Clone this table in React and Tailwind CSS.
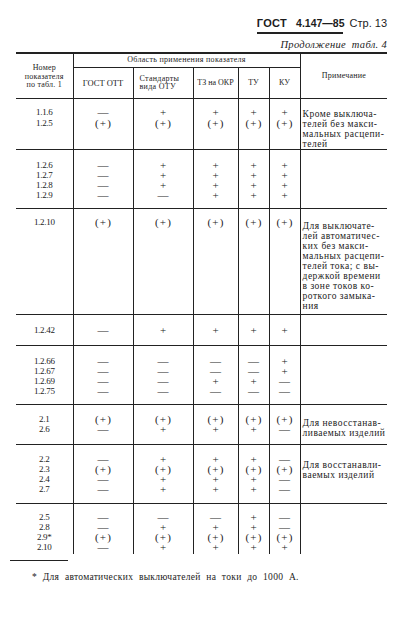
import React from "react"

const rows = [
  {
    h: 51, pt: 8, ptNote: 10, lh: 11,
    num: ["1.1.6", "1.2.5"],
    cols: [["—", "(+)"], ["+", "(+)"], ["+", "(+)"], ["+", "(+)"], ["+", "(+)"]],
    note: ["Кроме выключа-", "телей без макси-", "мальных расцепи-", "телей"]
  },
  {
    h: 59, pt: 10, ptNote: 10, lh: 10,
    num: ["1.2.6", "1.2.7", "1.2.8", "1.2.9"],
    cols: [["—", "—", "—", "—"], ["+", "+", "+", "—"], ["+", "+", "+", "+"], ["+", "+", "+", "+"], ["+", "+", "+", "+"]],
    note: []
  },
  {
    h: 106, pt: 8, ptNote: 12, lh: 10,
    num: ["1.2.10"],
    cols: [["(+)"], ["(+)"], ["(+)"], ["(+)"], ["(+)"]],
    note: [
      "Для выключате-", "лей автоматичес-", "ких без макси-", "мальных расцепи-",
      "телей тока; с вы-", "держкой времени", "в зоне токов ко-", "роткого замыка-", "ния"
    ]
  },
  {
    h: 31, pt: 10, ptNote: 10, lh: 10,
    num: ["1.2.42"],
    cols: [["—"], ["+"], ["+"], ["+"], ["+"]],
    note: []
  },
  {
    h: 59, pt: 10, ptNote: 10, lh: 10,
    num: ["1.2.66", "1.2.67", "1.2.69", "1.2.75"],
    cols: [["—", "—", "—", "—"], ["—", "—", "—", "—"], ["—", "—", "+", "—"], ["—", "—", "+", "—"], ["+", "+", "—", "—"]],
    note: []
  },
  {
    h: 40, pt: 9, ptNote: 13, lh: 10,
    num: ["2.1", "2.6"],
    cols: [["(+)", "—"], ["(+)", "+"], ["(+)", "+"], ["(+)", "+"], ["(+)", "—"]],
    note: ["Для невосстанав-", "ливаемых изделий"]
  },
  {
    h: 59, pt: 9, ptNote: 15, lh: 10,
    num: ["2.2", "2.3", "2.4", "2.7"],
    cols: [["—", "(+)", "—", "—"], ["+", "(+)", "+", "+"], ["+", "(+)", "+", "+"], ["+", "(+)", "+", "+"], ["—", "(+)", "—", "—"]],
    note: ["Для восстанавли-", "ваемых изделий"]
  },
  {
    h: 50, pt: 8, ptNote: 8, lh: 10,
    num: ["2.5", "2.8", "2.9*", "2.10"],
    cols: [["—", "—", "(+)", "—"], ["—", "+", "(+)", "+"], ["—", "+", "(+)", "+"], ["+", "+", "(+)", "+"], ["—", "—", "(+)", "+"]],
    note: [],
    last: true
  }
]

const serif = "font-['Liberation_Serif','DejaVu_Serif',serif]"

const App = () => {
  return (
    <div className={`bg-white w-[404px] h-[628px] overflow-hidden text-[#1c1c1c] ${serif}`}>
      <div className="flex justify-end pt-[17px] pr-[17px]">
        <div className="flex flex-col">
          <div className="flex items-baseline font-['Liberation_Sans',sans-serif] text-[11px] leading-[13px]">
            <span className="font-bold tracking-[0.3px]">ГОСТ</span>
            <span className="font-bold ml-[9px] text-[10.5px]">4.147—85</span>
            <span className="ml-[5px]">Стр. 13</span>
          </div>
          <div className="h-[1.5px] bg-[#222] w-[86px] mt-[2px]" />
        </div>
      </div>

      <div className="flex justify-end pr-[17px] mt-[5px] italic text-[10.5px] leading-[12px] tracking-[0.3px]">
        Продолжение &nbsp;табл. 4
      </div>

      <div className="pl-[16px] mt-[1px]">
        <table className="table-fixed border-collapse w-[371px]">
          <colgroup>
            <col className="w-[57px]" />
            <col className="w-[60px]" />
            <col className="w-[60px]" />
            <col className="w-[45px]" />
            <col className="w-[31px]" />
            <col className="w-[31px]" />
            <col className="w-[87px]" />
          </colgroup>
          <thead>
            <tr className="border-t-2 border-[#222] h-[15px]">
              <th rowSpan={2} className="font-normal text-[8px] leading-[8.5px] tracking-[0.2px] align-middle text-center border-b border-[#222] p-0 pt-[2px]">
                Номер<br />показателя<br />по табл. 1
              </th>
              <th colSpan={5} className="font-normal text-[8px] leading-[10px] tracking-[0.3px] text-center border-l border-b border-[#222] p-0">
                Область применения показателя
              </th>
              <th rowSpan={2} className="font-normal text-[8px] leading-[10px] tracking-[0.2px] text-center border-l border-b border-[#222] p-0">
                Примечание
              </th>
            </tr>
            <tr className="h-[31px] border-b border-[#222]">
              <th className="font-normal text-[8.5px] text-center border-l border-[#222] p-0">ГОСТ ОТТ</th>
              <th className="font-normal text-[8px] leading-[8.5px] tracking-[0.3px] text-left pl-[6px] border-l border-[#222] p-0">
                Стандарты<br />вида ОТУ
              </th>
              <th className="font-normal text-[8px] text-center border-l border-[#222] p-0 whitespace-nowrap">ТЗ на ОКР</th>
              <th className="font-normal text-[8px] text-center border-l border-[#222] p-0">ТУ</th>
              <th className="font-normal text-[8px] text-center border-l border-[#222] p-0">КУ</th>
            </tr>
          </thead>
          <tbody>
            {rows.map((row, i) => (
              <tr key={i} className={row.last ? "" : "border-b border-[#222]"} style={{ height: row.h }}>
                <td className="align-top p-0 text-center text-[9px] tracking-[-0.3px]" style={{ paddingTop: row.pt, lineHeight: `${row.lh}px` }}>
                  {row.num.map((n, k) => <div key={k}>{n}</div>)}
                </td>
                {row.cols.map((col, j) => (
                  <td key={j} className="align-top p-0 text-center text-[11px] border-l border-[#222]" style={{ paddingTop: row.pt, lineHeight: `${row.lh}px` }}>
                    {col.map((s, k) => (
                      <div key={k} className={s === "(+)" ? "tracking-[1.2px] pl-[1px]" : ""}>{s}</div>
                    ))}
                  </td>
                ))}
                <td className="align-top p-0 pl-[2px] text-[9.5px] leading-[10px] tracking-[0.5px] border-l border-[#222] whitespace-nowrap" style={{ paddingTop: row.ptNote }}>
                  {row.note.map((t, k) => <div key={k}>{t}</div>)}
                </td>
              </tr>
            ))}
          </tbody>
        </table>
      </div>

      <div className="ml-[10px] mt-[6px] w-[58px] h-[1.5px] bg-[#222]" />

      <div className="ml-[32px] mt-[10px] text-[9.5px] leading-[12px] tracking-[0.3px] [word-spacing:3px]">
        * Для автоматических выключателей на токи до 1000 А.
      </div>
    </div>
  )
}

export default App
